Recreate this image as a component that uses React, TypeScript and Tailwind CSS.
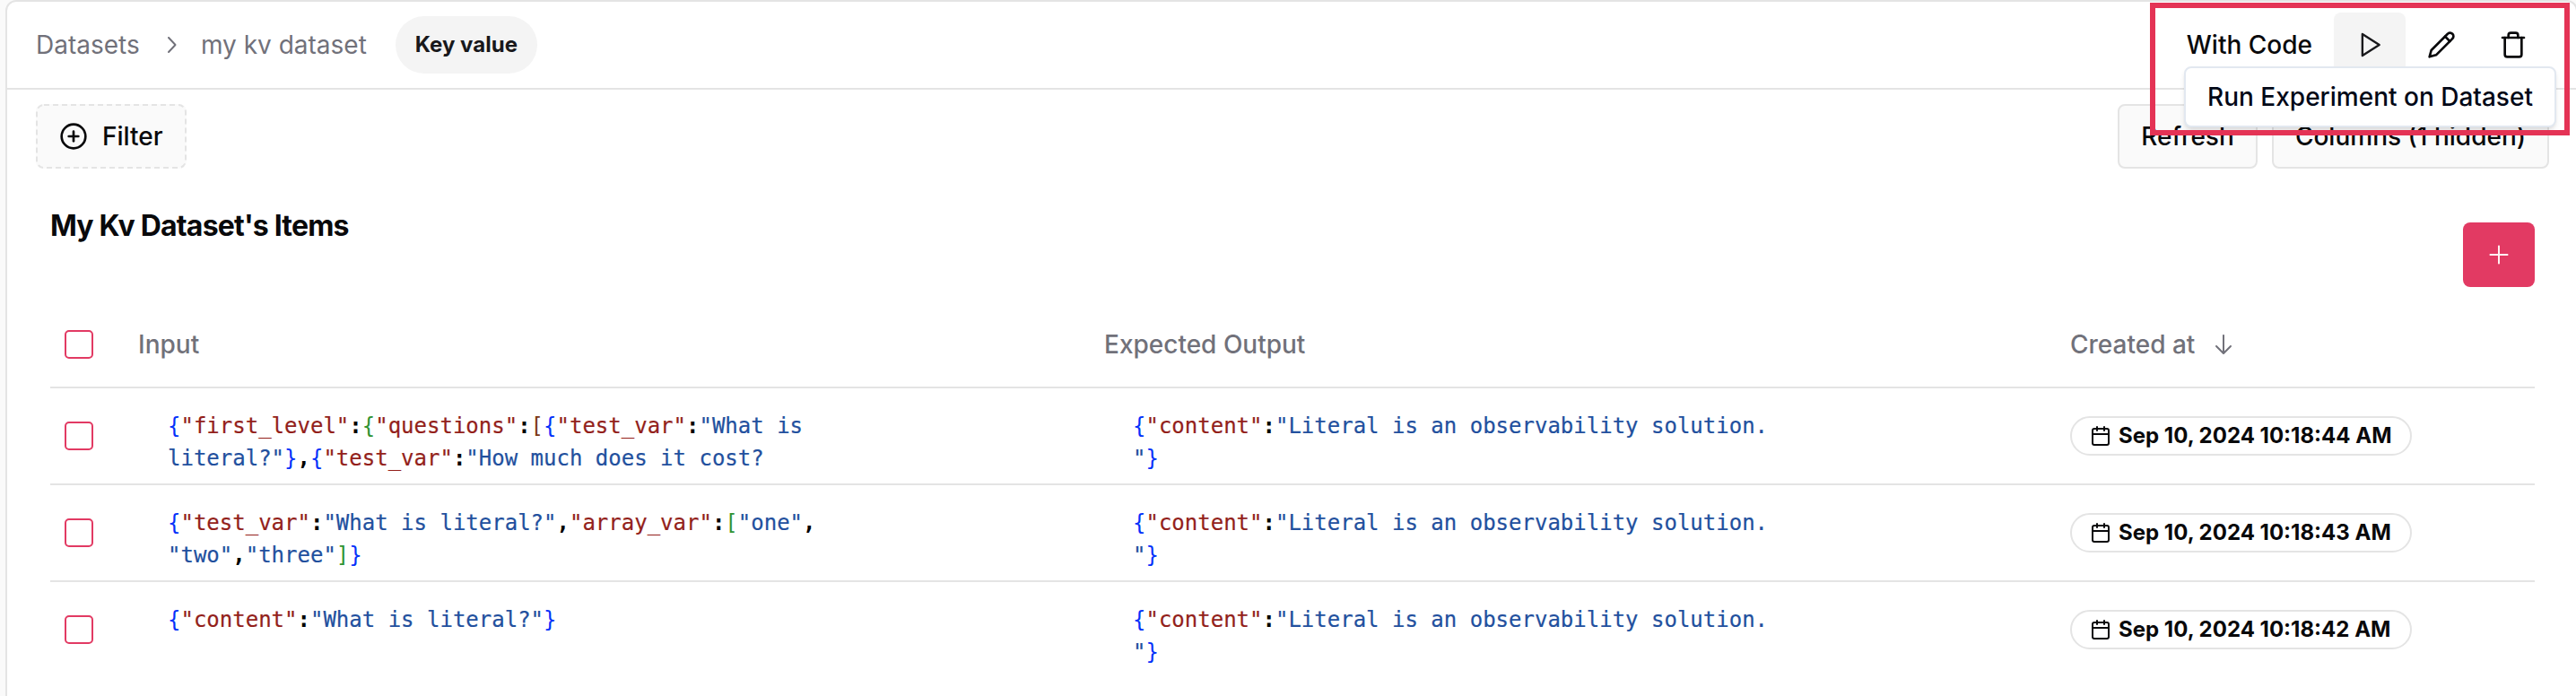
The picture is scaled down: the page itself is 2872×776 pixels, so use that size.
import React from "react";
import { Trash, Calendar, CirclePlus } from "lucide-react";

type Tone = "b" | "g" | "n" | "k" | "s" | "p";
type Token = [Tone, string];

const tones: Record<Tone, string> = {
  b: "text-[#0431fa]",
  g: "text-[#319331]",
  n: "text-[#7b3814]",
  k: "text-[#931f1b] [-webkit-text-stroke:0.2px]",
  s: "text-[#22509e] [-webkit-text-stroke:0.2px]",
  p: "font-bold text-black",
};

const output: Token[][] = [
  [["b", "{"], ["k", '"content"'], ["p", ":"], ["s", '"Literal is an observability solution.']],
  [["s", '"'], ["b", "}"]],
];

const rows: { input: Token[][]; time: string }[] = [
  {
    input: [
      [["b", "{"], ["k", '"first_level"'], ["p", ":"], ["g", "{"], ["k", '"questions"'], ["p", ":"], ["n", "["], ["b", "{"], ["k", '"test_var"'], ["p", ":"], ["s", '"What is']],
      [["s", 'literal?"'], ["b", "}"], ["p", ","], ["b", "{"], ["k", '"test_var"'], ["p", ":"], ["s", '"How much does it cost?']],
    ],
    time: "Sep 10, 2024 10:18:44 AM",
  },
  {
    input: [
      [["b", "{"], ["k", '"test_var"'], ["p", ":"], ["s", '"What is literal?"'], ["p", ","], ["k", '"array_var"'], ["p", ":"], ["g", "["], ["s", '"one"'], ["p", ","]],
      [["s", '"two"'], ["p", ","], ["s", '"three"'], ["g", "]"], ["b", "}"]],
    ],
    time: "Sep 10, 2024 10:18:43 AM",
  },
  {
    input: [[["b", "{"], ["k", '"content"'], ["p", ":"], ["s", '"What is literal?"'], ["b", "}"]]],
    time: "Sep 10, 2024 10:18:42 AM",
  },
];

function Code({ lines }: { lines: Token[][] }) {
  return (
    <div className="h-[72px] whitespace-pre font-['DejaVu_Sans_Mono',monospace] text-[24px] leading-[36px]">
      {lines.map((line, i) => (
        <div key={i}>
          {line.map(([tone, text], j) => (
            <span key={j} className={tones[tone]}>{text}</span>
          ))}
        </div>
      ))}
    </div>
  );
}

function Checkbox() {
  return <span className="block h-8 w-8 rounded-[5px] border-2 border-[#e23a63]" />;
}

const columns = "grid grid-cols-[82px_1077px_1077px_1fr]";

export default function App() {
  return (
    <div className="relative h-[776px] w-[2872px] overflow-hidden bg-[#fafafa] pl-[6px] font-['Inter',sans-serif] text-[#09090b]">
      <div className="h-[800px] w-[2868px] rounded-t-[12px] border-2 border-[#e4e4e4] bg-white">
        <header className="flex h-[98px] items-center justify-between border-b-2 border-[#e4e4e4] pl-8 pr-[30px]">
          <div className="flex items-center text-[28px] leading-10 text-[#71717a]">
            <span className="w-[115px]">Datasets</span>
            <svg className="ml-[20px] h-[30px] w-[30px]" viewBox="0 0 15 15" fill="currentColor">
              <path fillRule="evenodd" clipRule="evenodd" d="M6.1584 3.13508C6.35985 2.94621 6.67627 2.95642 6.86514 3.15788L10.6151 7.15788C10.7954 7.3502 10.7954 7.64949 10.6151 7.84182L6.86514 11.8418C6.67627 12.0433 6.35985 12.0535 6.1584 11.8646C5.95694 11.6757 5.94673 11.3593 6.1356 11.1579L9.565 7.49985L6.1356 3.84182C5.94673 3.64036 5.95694 3.32394 6.1584 3.13508Z" />
            </svg>
            <span className="ml-[19px]">my kv dataset</span>
            <span className="ml-8 flex h-16 w-[158px] items-center justify-center rounded-full bg-[#f4f4f4] text-[24px] font-[650] text-[#18181b]">Key value</span>
          </div>
          <div className="flex items-center text-[28px] font-medium">
            <span className="mr-6">With Code</span>
            <span className="flex h-[72px] w-20 items-center justify-center rounded-lg bg-[#f4f4f4] text-[#18181b]">
              <svg className="h-8 w-8" viewBox="0 0 24 24" fill="none" stroke="currentColor" strokeWidth="1.8" strokeLinejoin="round">
                <path d="M5.9 3 20 12 5.9 21Z" />
              </svg>
            </span>
            <span className="flex h-[72px] w-20 items-center justify-center">
              <svg className="h-8 w-8" viewBox="0 0 24 24" fill="none" stroke="currentColor" strokeWidth="2" strokeLinecap="round" strokeLinejoin="round">
                <path d="M17 3a2.85 2.83 0 1 1 4 4L7.5 20.5 2 22l1.5-5.5Z" />
                <path d="m15 5 4 4" />
              </svg>
            </span>
            <span className="flex h-[72px] w-20 items-center justify-center"><Trash size={32} strokeWidth={2} /></span>
          </div>
        </header>

        <div className="flex justify-between pl-8 pr-[30px] pt-4 text-[28px] font-medium">
          <div className="flex h-[72px] w-[168px] items-center rounded-lg bg-[#fafafa]">
            <svg className="absolute h-[72px] w-[168px]" fill="none">
              <rect x="1" y="1" width="166" height="70" rx="8" stroke="#e4e4e4" strokeWidth="2" strokeDasharray="6 4" />
            </svg>
            <CirclePlus size={32} strokeWidth={2} className="ml-[26px]" />
            <span className="ml-4">Filter</span>
          </div>
          <div className="flex gap-4">
            <span className="flex h-[72px] w-[156px] items-center justify-center rounded-lg border-2 border-[#e4e4e4] bg-[#fafafa]">Refresh</span>
            <span className="flex h-[72px] w-[309px] items-center justify-center whitespace-nowrap rounded-lg border-2 border-[#e4e4e4] bg-[#fafafa]">Columns (1 hidden)</span>
          </div>
        </div>

        <div className="flex h-[168px] justify-between pl-12 pr-[46px]">
          <h1 className="mt-[44px] text-[32px] font-bold leading-[40px] tracking-[-0.8px]">My Kv Dataset's Items</h1>
          <span className="mt-[60px] flex h-[72px] w-20 items-center justify-center rounded-lg bg-[#e23a63] text-[#fff1f2]">
            <svg className="h-[30px] w-[30px]" viewBox="0 0 15 15" fill="currentColor">
              <path fillRule="evenodd" clipRule="evenodd" d="M8 2.75C8 2.47386 7.77614 2.25 7.5 2.25C7.22386 2.25 7 2.47386 7 2.75V7H2.75C2.47386 7 2.25 7.22386 2.25 7.5C2.25 7.77614 2.47386 8 2.75 8H7V12.25C7 12.5261 7.22386 12.75 7.5 12.75C7.77614 12.75 8 12.5261 8 12.25V8H12.25C12.5261 8 12.75 7.77614 12.75 7.5C12.75 7.22386 12.5261 7 12.25 7H8V2.75Z" />
            </svg>
          </span>
        </div>

        <div className="ml-12 mr-[46px]">
          <div className={columns + " h-[77px] border-b-2 border-[#e4e4e4] text-[28px] font-medium text-[#71717a]"}>
            <div className="pl-4 pt-[12px]"><Checkbox /></div>
            <div className="pl-4 pt-[7px]">Input</div>
            <div className="pl-4 pt-[7px]">Expected Output</div>
            <div className="flex items-start pl-4 pt-[7px]">
              Created at
              <svg className="ml-[17px] mt-[6px] h-[30px] w-[30px]" viewBox="0 0 15 15" fill="currentColor">
                <path fillRule="evenodd" clipRule="evenodd" d="M7.5 2C7.77614 2 8 2.22386 8 2.5L8 11.2929L11.1464 8.14645C11.3417 7.95118 11.6583 7.95118 11.8536 8.14645C12.0488 8.34171 12.0488 8.65829 11.8536 8.85355L7.85355 12.8536C7.75979 12.9473 7.63261 13 7.5 13C7.36739 13 7.24021 12.9473 7.14645 12.8536L3.14645 8.85355C2.95118 8.65829 2.95118 8.34171 3.14645 8.14645C3.34171 7.95118 3.65829 7.95118 3.85355 8.14645L7 11.2929L7 2.5C7 2.22386 7.22386 2 7.5 2Z" />
              </svg>
            </div>
          </div>
          {rows.map((row) => (
            <div key={row.time} className={columns + " h-[108px] border-b-2 border-[#e4e4e4] last:border-transparent"}>
              <div className="flex items-center pl-4"><Checkbox /></div>
              <div className="pl-[49px] pt-[24px]"><Code lines={row.input} /></div>
              <div className="pl-[48px] pt-[24px]"><Code lines={output} /></div>
              <div className="flex items-center pl-4">
                <span className="flex h-11 w-[381px] items-center rounded-full border-2 border-[#e4e4e4] pl-5 text-[24px] font-[650]">
                  <Calendar size={24} strokeWidth={2} className="mr-2" />
                  <span className="whitespace-nowrap">{row.time}</span>
                </span>
              </div>
            </div>
          ))}
        </div>
      </div>

      <div className="absolute left-[2435px] top-[74px] flex h-[68px] w-[415px] items-center justify-center whitespace-nowrap rounded-lg border-2 border-[#e2e8f0] bg-white text-[28px] font-medium text-[#020817] shadow-md">
        Run Experiment on Dataset
      </div>
      <div className="absolute left-[2397px] top-[3px] h-[148px] w-[468px] border-[6px] border-[#e43355]" />
    </div>
  );
}
